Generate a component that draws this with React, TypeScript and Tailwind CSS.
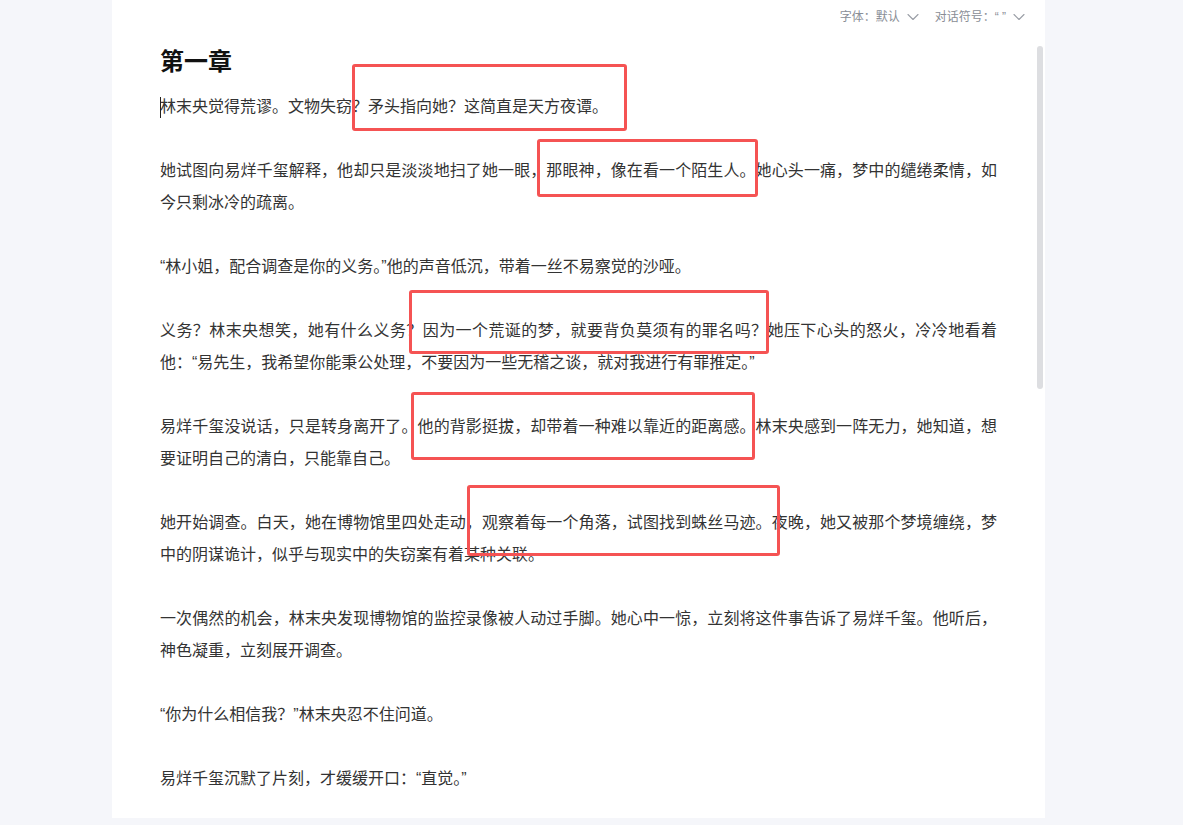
import { ChevronDown } from "lucide-react";

const paragraphs: string[] = [
  "林末央觉得荒谬。文物失窃？矛头指向她？这简直是天方夜谭。",
  "她试图向易烊千玺解释，他却只是淡淡地扫了她一眼，那眼神，像在看一个陌生人。她心头一痛，梦中的缱绻柔情，如今只剩冰冷的疏离。",
  "“林小姐，配合调查是你的义务。”他的声音低沉，带着一丝不易察觉的沙哑。",
  "义务？林末央想笑，她有什么义务？因为一个荒诞的梦，就要背负莫须有的罪名吗？她压下心头的怒火，冷冷地看着他：“易先生，我希望你能秉公处理，不要因为一些无稽之谈，就对我进行有罪推定。”",
  "易烊千玺没说话，只是转身离开了。他的背影挺拔，却带着一种难以靠近的距离感。林末央感到一阵无力，她知道，想要证明自己的清白，只能靠自己。",
  "她开始调查。白天，她在博物馆里四处走动，观察着每一个角落，试图找到蛛丝马迹。夜晚，她又被那个梦境缠绕，梦中的阴谋诡计，似乎与现实中的失窃案有着某种关联。",
  "一次偶然的机会，林末央发现博物馆的监控录像被人动过手脚。她心中一惊，立刻将这件事告诉了易烊千玺。他听后，神色凝重，立刻展开调查。",
  "“你为什么相信我？”林末央忍不住问道。",
  "易烊千玺沉默了片刻，才缓缓开口：“直觉。”",
];

// annotation boxes, relative to the white page
const marks = [
  "left-[240px] top-[64px] w-[275px] h-[67px]",
  "left-[425px] top-[139px] w-[221px] h-[58px]",
  "left-[297px] top-[290px] w-[360px] h-[64px]",
  "left-[299px] top-[392px] w-[344px] h-[68px]",
  "left-[355px] top-[485px] w-[313px] h-[71px]",
];

export default function App() {
  return (
    <div
      className="min-h-screen w-full bg-[#f5f6fa]"
      style={{ fontFamily: '"Liberation Sans", "Noto Sans CJK SC", sans-serif' }}
    >
      <div className="relative ml-[112px] h-[818px] w-[933px] overflow-hidden bg-white">
        {/* Toolbar */}
        <div className="flex h-[34px] items-center justify-end gap-3 pr-4 text-xs text-[#8a8e96]">
          <button className="flex items-center">
            <span>字体：默认</span>
            <ChevronDown size={20} strokeWidth={1.3} className="ml-[3px] text-[#9a9ea6]" />
          </button>
          <button className="flex items-center">
            <span>对话符号：“&nbsp;”</span>
            <ChevronDown size={20} strokeWidth={1.3} className="ml-[3px] text-[#9a9ea6]" />
          </button>
        </div>

        {/* Editor content */}
        <div className="px-12 pt-3">
          <h1 className="mb-[13px] text-2xl leading-8 font-bold text-[#111]">第一章</h1>
          {paragraphs.map((p, i) => (
            <p
              key={i}
              className="relative mb-8 text-justify text-base leading-8 text-[#333]"
            >
              {i === 0 && <span className="absolute left-0 top-[6px] h-[21px] w-px bg-[#222]" />}
              {p}
            </p>
          ))}
        </div>

        {/* Scrollbar thumb */}
        <div className="absolute left-[925px] top-[46px] h-[343px] w-[6px] rounded-full bg-[#dddee1]" />

        {/* Red annotation boxes */}
        {marks.map((m, i) => (
          <div
            key={i}
            className={`pointer-events-none absolute rounded-[3px] border-[3px] border-[#f55353] ${m}`}
          />
        ))}
      </div>
    </div>
  );
}
